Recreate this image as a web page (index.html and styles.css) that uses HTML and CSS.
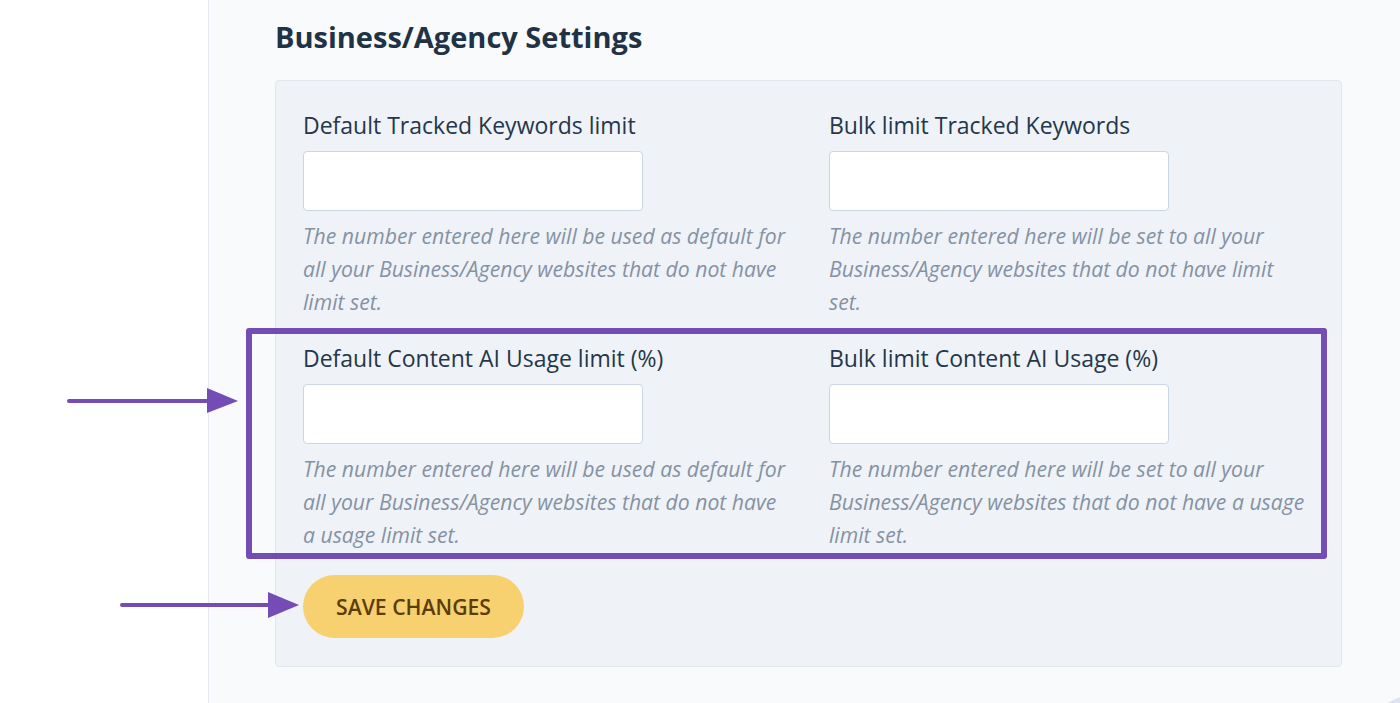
FILE: index.html
```html
<!DOCTYPE html>
<html lang="en">
<head>
<meta charset="utf-8">
<title>Business/Agency Settings</title>
<link rel="stylesheet" href="styles.css">
</head>
<body>
<div class="page">
  <aside class="sidebar"></aside>
  <main class="main">
    <h2 class="title">Business/Agency Settings</h2>
    <section class="card">
      <div class="grid">
        <div class="field">
          <label class="label">Default Tracked Keywords limit</label>
          <input class="input" type="text">
          <p class="help">The number entered here will be used as default for all your Business/Agency websites that do not have limit set.</p>
        </div>
        <div class="field">
          <label class="label">Bulk limit Tracked Keywords</label>
          <input class="input" type="text">
          <p class="help">The number entered here will be set to all your Business/Agency websites that do not have limit set.</p>
        </div>
        <div class="field">
          <label class="label">Default Content AI Usage limit (%)</label>
          <input class="input" type="text">
          <p class="help">The number entered here will be used as default for all your Business/Agency websites that do not have a usage limit set.</p>
        </div>
        <div class="field">
          <label class="label">Bulk limit Content AI Usage (%)</label>
          <input class="input" type="text">
          <p class="help">The number entered here will be set to all your Business/Agency websites that do not have a usage limit set.</p>
        </div>
      </div>
      <button class="save" type="button">SAVE CHANGES</button>
      <div class="highlight"></div>
    </section>
  </main>
  <svg class="arrows" width="320" height="703" viewBox="0 0 320 703">
    <line x1="69" y1="401" x2="212" y2="401" stroke="#744cb6" stroke-width="4" stroke-linecap="round"/>
    <polygon points="207,388 238,401 207,413" fill="#744cb6"/>
    <line x1="122" y1="605" x2="272" y2="605" stroke="#744cb6" stroke-width="4" stroke-linecap="round"/>
    <polygon points="268,592 299,605 268,618" fill="#744cb6"/>
  </svg>
  <div class="corner"></div>
</div>
</body>
</html>
```

FILE: styles.css
```css
* { box-sizing: border-box; }
html, body { margin: 0; padding: 0; }
body {
  font-family: "Open Sans", "Noto Sans", sans-serif;
  background: #ffffff;
  overflow: hidden;
}
.page {
  position: relative;
  display: flex;
  height: 703px;
  overflow: hidden;
}
.sidebar {
  width: 209px;
  flex: none;
  background: #ffffff;
  border-right: 1px solid #e6e9ef;
}
.main {
  flex: 1;
  background: #f9fafc;
  padding: 17px 0 0 66px;
}
.title {
  margin: 0;
  font-size: 29px;
  line-height: 40px;
  font-weight: 700;
  color: #1f3246;
}
.card {
  position: relative;
  margin-top: 23px;
  width: 1067px;
  background: #eff2f7;
  border: 1px solid #e2e7ee;
  border-radius: 4px;
  padding: 28px 27px 28px 27px;
}
.grid {
  display: grid;
  grid-template-columns: 487px 478px;
  column-gap: 39px;
  row-gap: 24px;
}
.field { display: flex; flex-direction: column; align-items: flex-start; }
.label {
  font-size: 23px;
  line-height: 33px;
  color: #24374b;
}
.input {
  margin-top: 9px;
  width: 340px;
  height: 60px;
  background: #ffffff;
  border: 1px solid #c9d6e3;
  border-radius: 4px;
  font: inherit;
  outline: none;
}
.help {
  margin: 8px 0 0 0;
  font-size: 21.2px;
  line-height: 33px;
  font-style: italic;
  color: #8492a4;
}
.save {
  margin-top: 24px;
  height: 63px;
  padding: 0 33px;
  border: none;
  border-radius: 32px;
  background: #f7d070;
  color: #5b3d05;
  font-family: "Open Sans", "Noto Sans", sans-serif;
  font-size: 21.2px;
  font-weight: 600;
}
.highlight {
  position: absolute;
  left: -30px;
  top: 247px;
  width: 1081px;
  height: 231px;
  border: 6px solid #744cb6;
  border-radius: 3px;
  pointer-events: none;
}
.arrows {
  position: absolute;
  left: 0;
  top: 0;
  pointer-events: none;
}
.corner {
  position: absolute;
  left: 1365px;
  top: 695px;
  width: 100px;
  height: 100px;
  border-radius: 50%;
  background: #dfe5ee;
}
```
